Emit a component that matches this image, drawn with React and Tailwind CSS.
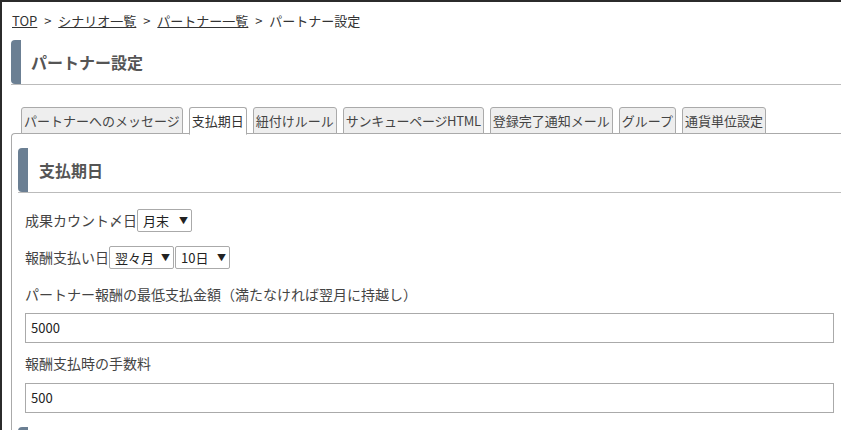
import React from "react";

const font = { fontFamily: '"Noto Sans CJK JP", "Noto Sans", sans-serif' };

function Select({ label, w }) {
  return (
    <div className={`shrink-0 whitespace-nowrap flex items-center h-[23px] border border-[#aaa] rounded-[2px] bg-white pl-[5px] pr-[3px] text-[13px] text-[#222] ${w}`}>
      <span>{label}</span>
      <span className="text-[9px] ml-auto leading-none">▼</span>
    </div>
  );
}

function Sep() {
  return <span className="w-[11px] text-center">&gt;</span>;
}

export default function App() {
  const tabs = [
    { t: "パートナーへのメッセージ" },
    { t: "支払期日", active: true },
    { t: "紐付けルール" },
    { t: "サンキューページHTML", narrow: true },
    { t: "登録完了通知メール" },
    { t: "グループ" },
    { t: "通貨単位設定" },
  ];
  return (
    <div style={font} className="w-[841px] h-[430px] overflow-hidden bg-white border-t-2 border-l-2 border-[#2b2b2b] text-[#333]">
      <div className="pl-[10px] pt-[10px] text-[13px] leading-[18px] text-[#333] flex gap-[5px] whitespace-nowrap">
        <span className="underline">TOP</span>
        <Sep />
        <span className="underline">シナリオ一覧</span>
        <Sep />
        <span className="underline">パートナー一覧</span>
        <Sep />
        <span>パートナー設定</span>
      </div>
      <div className="ml-[9px] mt-[10px] flex h-[45px] border-b border-[#bbb]">
        <div className="w-[10px] bg-[#6b7f93] rounded-l-[4px]" />
        <div className="pl-[10px] flex items-center text-[16px] font-bold text-[#555]">パートナー設定</div>
      </div>
      <div className="ml-[9px] mt-[22px]">
        <div className="flex gap-[6px] pl-[10px] items-end relative z-10 whitespace-nowrap">
          {tabs.map((tb) => (
            <div
              key={tb.t}
              className={`h-[27px] px-[2px] flex items-center text-[13px] border border-[#aaa] rounded-t-[3px] ${
                tb.active ? "bg-white border-b-white text-[#333] h-[28px] -mb-[1px]" : "bg-[#eee] text-[#444]"
              } ${tb.narrow ? "tracking-[-0.3px]" : ""}`}
            >
              {tb.t}
            </div>
          ))}
        </div>
        <div className="border-t border-l border-[#aaa] rounded-tl-[4px] -mt-[1px] pl-[6px] pt-[14px]">
          <div className="flex h-[45px] border-b border-[#bbb]">
            <div className="w-[10px] bg-[#6b7f93] rounded-l-[4px]" />
            <div className="pl-[11px] flex items-center text-[16px] font-bold text-[#555]">支払期日</div>
          </div>
          <div className="pl-[7px] pr-[7px] text-[14px] text-[#444]">
            <div className="flex items-center mt-[16px] h-[23px]">
              <span>成果カウント〆日</span>
              <Select label="月末" w="w-[55px]" />
            </div>
            <div className="flex items-center mt-[14px] h-[23px] gap-[1px]">
              <span className="-mr-[1px]">報酬支払い日</span>
              <Select label="翌々月" w="w-[65px]" />
              <Select label="10日" w="w-[55px]" />
            </div>
            <div className="mt-[14px] leading-[22px]">パートナー報酬の最低支払金額（満たなければ翌月に持越し）</div>
            <div className="mt-[8px] h-[30px] border border-[#aaa] flex items-center px-[5px] text-[13px] text-[#222]">5000</div>
            <div className="mt-[9px] leading-[22px]">報酬支払時の手数料</div>
            <div className="mt-[9px] h-[30px] border border-[#aaa] flex items-center px-[5px] text-[13px] text-[#222]">500</div>
          </div>
          <div className="flex h-[45px] mt-[14px]">
            <div className="w-[10px] bg-[#6b7f93] rounded-l-[4px]" />
          </div>
        </div>
      </div>
    </div>
  );
}
